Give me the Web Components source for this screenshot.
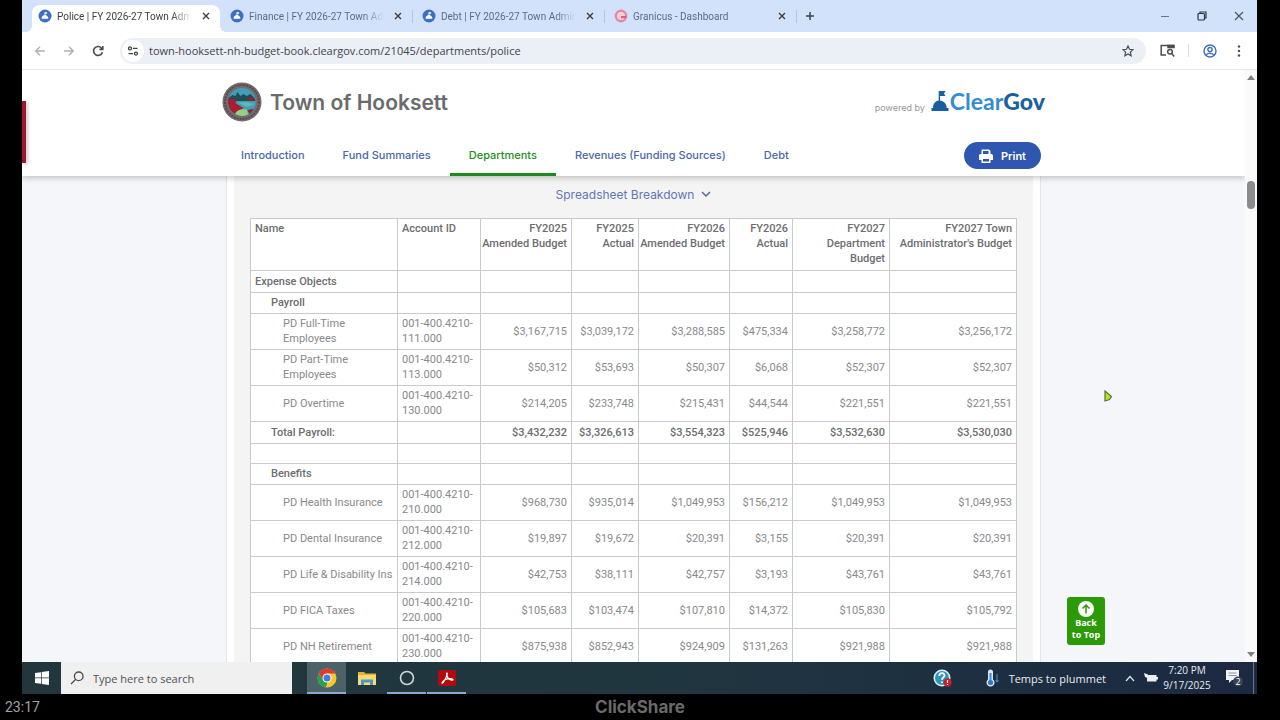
<!DOCTYPE html>
<html lang="en">
<head>
<meta charset="utf-8">
<title>Police | FY 2026-27 Town Administrator's Budget</title>
<style>
  * { box-sizing: border-box; }
  body {
    margin: 0;
    height: 100vh;
    display: flex;
    flex-direction: column;
    background: #000;
    font-family: "Open Sans", "Noto Sans", sans-serif;
    overflow: hidden;
  }
  main {
    flex: 1;
    min-height: 0;
    display: flex;
    flex-direction: column;
    margin: 0 23px 0 22px;
    background: #fff;
  }
</style>
</head>
<body>
<main>
  <tab-strip>
    <browser-tab icon="cleargov" active>Police | FY 2026-27 Town Administrator</browser-tab>
    <browser-tab icon="cleargov">Finance | FY 2026-27 Town Administrator</browser-tab>
    <browser-tab icon="cleargov">Debt | FY 2026-27 Town Administrator</browser-tab>
    <browser-tab icon="granicus">Granicus - Dashboard</browser-tab>
  </tab-strip>
  <browser-toolbar url="town-hooksett-nh-budget-book.cleargov.com/21045/departments/police"></browser-toolbar>
  <page-view>
    <site-header>
      <nav-link>Introduction</nav-link>
      <nav-link>Fund Summaries</nav-link>
      <nav-link active>Departments</nav-link>
      <nav-link>Revenues (Funding Sources)</nav-link>
      <nav-link>Debt</nav-link>
    </site-header>
    <budget-card>
      <budget-table></budget-table>
    </budget-card>
    <back-to-top slot="overlay"></back-to-top>
  </page-view>
  <task-bar></task-bar>
</main>
<share-bar time="23:17">ClickShare</share-bar>

<script>
const favicons = {
  cleargov: `<svg width="14" height="14" viewBox="0 0 14 14"><circle cx="7" cy="7" r="6.5" fill="#3f6fc4"/><path d="M3.5 9.8c0-2 1.2-3.6 3-3.9V3.2h2.6v1.6H7.4v1.1c1.8.3 3 1.9 3 3.9z" fill="#fff"/></svg>`,
  granicus: `<svg width="14" height="14" viewBox="0 0 14 14"><circle cx="7" cy="7" r="5.2" fill="#f6cfda" stroke="#e58aa4" stroke-width="2.4"/><path d="M7 7h5.4v2.2H7z" fill="#db5f80"/></svg>`
};

class TabStrip extends HTMLElement {
  constructor() {
    super();
    this.attachShadow({ mode: 'open' }).innerHTML = `
      <style>
        :host {
          display: flex;
          height: 32px;
          padding-left: 10px;
          background: #d3e2fb;
        }
        button {
          border: 0;
          padding: 0;
          background: none;
          display: grid;
          place-items: center;
        }
        .add { width: 20px; height: 32px; }
        .window { margin-left: auto; display: flex; }
        .window button { width: 37px; height: 32px; }
      </style>
      <slot></slot>
      <button class="add" aria-label="New tab">
        <svg width="10" height="10" viewBox="0 0 10 10"><path d="M5 1v8M1 5h8" stroke="#3c4350" stroke-width="1.5"/></svg>
      </button>
      <div class="window">
        <button aria-label="Minimize"><svg width="10" height="10"><path d="M1 5.5h8" stroke="#6b7587"/></svg></button>
        <button aria-label="Restore"><svg width="10" height="10" viewBox="0 0 10 10" fill="none" stroke="#2c3442" stroke-width="1.2"><rect x="1" y="2.5" width="6.5" height="6.5" rx="1"/><path d="M3 2.2V1h6v6H7.8"/></svg></button>
        <button aria-label="Close"><svg width="10" height="10" viewBox="0 0 10 10"><path d="M1 1l8 8M9 1L1 9" stroke="#4a5364" stroke-width="1.2"/></svg></button>
      </div>
    `;
  }
}

class BrowserTab extends HTMLElement {
  constructor() {
    super();
    this.attachShadow({ mode: 'open' });
  }

  connectedCallback() {
    this.shadowRoot.innerHTML = `
      <style>
        :host {
          display: flex;
          flex: 0 1 192px;
          min-width: 0;
          box-sizing: border-box;
          height: 27px;
          margin-top: 5px;
          padding-right: 4px;
        }
        .tab {
          flex: 1;
          min-width: 0;
          display: flex;
          align-items: center;
          gap: 5px;
          padding: 0 5px 0 6px;
          height: 22px;
          position: relative;
          color: #5c6a84;
          font: 10px Roboto, sans-serif;
        }
        .tab::after {
          content: "";
          width: 1px;
          height: 13px;
          background: #b3c4e2;
          position: absolute;
          right: -1px;
        }
        :host([active]) .tab {
          height: 27px;
          padding-bottom: 5px;
          box-sizing: border-box;
          background: #fff;
          border-radius: 8px 8px 0 0;
          color: #3c4043;
        }
        :host([active]) .tab::before, :host([active]) .tab::after {
          content: "";
          position: absolute;
          bottom: 0;
          width: 6px;
          height: 6px;
        }
        :host([active]) .tab::before {
          left: -6px;
          background: radial-gradient(circle at 0 0, transparent 6px, #fff 6px);
        }
        :host([active]) .tab::after {
          right: -6px;
          background: radial-gradient(circle at 100% 0, transparent 6px, #fff 6px);
        }
        svg { flex: none; }
        .title {
          flex: 1;
          overflow: hidden;
          white-space: nowrap;
          mask-image: linear-gradient(to right, #000 85%, transparent);
        }
        button {
          border: 0;
          padding: 0;
          background: none;
          width: 18px;
          height: 18px;
          display: grid;
          place-items: center;
        }
      </style>
      <div class="tab">
        ${favicons[this.getAttribute('icon')]}
        <span class="title"><slot></slot></span>
        <button aria-label="Close tab"><svg width="8" height="8" viewBox="0 0 8 8"><path d="M1 1l6 6M7 1L1 7" stroke="#3c4043" stroke-width="1.4"/></svg></button>
      </div>
    `;
  }
}

class BrowserToolbar extends HTMLElement {
  constructor() {
    super();
    this.attachShadow({ mode: 'open' });
  }

  connectedCallback() {
    this.shadowRoot.innerHTML = `
      <style>
        :host {
          display: flex;
          align-items: center;
          height: 38px;
          box-sizing: border-box;
          padding: 0 4px 0 3px;
          background: #fff;
          border-bottom: 1px solid #e6e8ea;
        }
        button {
          border: 0;
          padding: 0;
          background: none;
          width: 29px;
          height: 28px;
          display: grid;
          place-items: center;
          flex: none;
        }
        .box {
          flex: 1;
          display: flex;
          align-items: center;
          height: 26px;
          margin: 0 7px 0 8px;
          padding-right: 4px;
          border-radius: 13px;
          background: #ebeff6;
        }
        .box .site {
          width: 22px;
          height: 22px;
          margin-left: 2px;
          border-radius: 50%;
          background: #fff;
        }
        input {
          flex: 1;
          min-width: 0;
          border: 0;
          padding: 0 0 0 5px;
          background: none;
          outline: none;
          font: 11px "Open Sans", sans-serif;
          color: #3f444b;
        }
        .line { width: 1px; height: 13px; margin: 0 6px; background: #d3dff2; }
      </style>
      <button aria-label="Back"><svg width="12" height="12" viewBox="0 0 12 12" fill="none" stroke="#aeb1b5" stroke-width="1.4"><path d="M11 6H2M6 1.8L1.8 6 6 10.2"/></svg></button>
      <button aria-label="Forward"><svg width="12" height="12" viewBox="0 0 12 12" fill="none" stroke="#aeb1b5" stroke-width="1.4"><path d="M1 6h9M6 1.8L10.2 6 6 10.2"/></svg></button>
      <button aria-label="Reload"><svg width="12" height="12" viewBox="0 0 12 12" fill="none" stroke="#4a4d51" stroke-width="1.6"><path d="M10.4 7.2A4.5 4.5 0 1 1 9.3 2.8L10.6 4M10.8 1v3.4H7.4"/></svg></button>
      <div class="box">
        <button class="site" aria-label="View site information"><svg width="12" height="12" viewBox="0 0 12 12" fill="none" stroke="#3c4043" stroke-width="1.3"><circle cx="3" cy="3.4" r="1.5"/><path d="M6 3.4h4.5M1.5 8.6H6"/><circle cx="9" cy="8.6" r="1.5"/></svg></button>
        <input type="text" aria-label="Address" value="${this.getAttribute('url')}">
        <button aria-label="Bookmark"><svg width="12" height="12" viewBox="0 0 12 12" fill="none" stroke="#4a4d51" stroke-width="1.2"><path d="M6 1l1.5 3.3 3.5.4-2.6 2.4.7 3.6L6 8.9l-3.1 1.8.7-3.6L1 4.7l3.5-.4z"/></svg></button>
      </div>
      <button aria-label="Search tabs"><svg width="15" height="13" viewBox="0 0 15 13" fill="none" stroke="#4a4d51" stroke-width="1.5"><path d="M6 11H1.2V1.5H13.5V4"/><path d="M8 1.5h6v2H8z" fill="#4a4d51"/><circle cx="10" cy="7.8" r="2.3"/><path d="M11.6 9.6l2.6 2.8"/></svg></button>
      <span class="line"></span>
      <button aria-label="Profile"><svg width="14" height="14" viewBox="0 0 14 14" fill="none" stroke="#3f6cb8" stroke-width="1.4"><circle cx="7" cy="7" r="6"/><circle cx="7" cy="5.6" r="2.1"/><path d="M3.2 11.2c1-2.4 6.6-2.4 7.6 0"/></svg></button>
      <button aria-label="Menu"><svg width="4" height="14" viewBox="0 0 4 14" fill="#4a4d51"><circle cx="2" cy="2.5" r="1.2"/><circle cx="2" cy="7" r="1.2"/><circle cx="2" cy="11.5" r="1.2"/></svg></button>
    `;
  }
}

class PageView extends HTMLElement {
  constructor() {
    super();
    this.attachShadow({ mode: 'open' }).innerHTML = `
      <style>
        :host {
          flex: 1;
          min-height: 0;
          display: flex;
          position: relative;
          overflow: hidden;
          background: #f4f6f9;
        }
        .content { flex: 1; min-width: 0; overflow: hidden; }
        .scrollbar {
          width: 12px;
          box-sizing: border-box;
          padding: 4px 0;
          display: flex;
          flex-direction: column;
          align-items: center;
          background: #fafafb;
        }
        .thumb {
          width: 8px;
          height: 28px;
          margin-top: 100px;
          margin-bottom: auto;
          border-radius: 4px;
          background: #8a8b8d;
        }
        .side {
          position: absolute;
          left: 0;
          top: 31px;
          width: 4px;
          height: 62px;
          background: #a3152f;
          box-shadow: 1px 1px 4px rgba(0, 0, 0, .3);
        }
        .cursor { position: absolute; left: 1081px; top: 320px; }
      </style>
      <div class="content"><slot></slot></div>
      <div class="scrollbar">
        <svg width="8" height="7" viewBox="0 0 8 7"><path d="M4 1l4 5H0z" fill="#808184"/></svg>
        <div class="thumb"></div>
        <svg width="8" height="7" viewBox="0 0 8 7"><path d="M4 6L0 1h8z" fill="#808184"/></svg>
      </div>
      <div class="side"></div>
      <slot name="overlay"></slot>
      <svg class="cursor" width="11" height="13" viewBox="0 0 11 13"><path d="M2 1l6.5 5.5-2 3-4.500 1.500z" fill="#b4e61e" stroke="#56753a" stroke-width="1.2"/></svg>
    `;
  }
}

class SiteHeader extends HTMLElement {
  constructor() {
    super();
    this.attachShadow({ mode: 'open' }).innerHTML = `
      <style>
        :host {
          display: block;
          position: relative;
          background: #fff;
          box-shadow: 0 2px 6px rgba(0, 0, 0, .22);
          font-family: Inter, sans-serif;
        }
        .inner { max-width: 823px; margin: 0 auto; }
        .brand {
          display: flex;
          align-items: center;
          gap: 8px;
          height: 64px;
        }
        h1 {
          margin: 0;
          font-size: 21px;
          font-weight: 600;
          color: #6a6b6d;
        }
        .powered {
          margin-left: auto;
          display: flex;
          align-items: flex-end;
          gap: 6px;
          color: #96979a;
          font-size: 9px;
          line-height: 13px;
        }
        .logo { display: flex; align-items: flex-end; gap: 1px; padding-bottom: 3px; }
        .logo span {
          font: 700 23px/20px Lato, sans-serif;
          color: #338dd2;
        }
        .logo b { color: #1a5f9e; }
        nav { display: flex; height: 42px; }
        .print {
          align-self: flex-start;
          margin-left: auto;
          margin-right: 4px;
          display: flex;
          align-items: center;
          gap: 8px;
          height: 27px;
          margin-top: 8px;
          padding: 0 15px;
          border: 0;
          border-radius: 14px;
          background: #2f57b0;
          color: #fff;
          font: 600 11px Inter, sans-serif;
        }
      </style>
      <div class="inner">
        <div class="brand">
          <svg width="40" height="40" viewBox="0 0 40 40">
            <circle cx="20" cy="20" r="19.5" fill="#756a6d"/>
            <circle cx="20" cy="20" r="17" fill="none" stroke="#574c50" stroke-width="2" stroke-dasharray="2 1"/>
            <circle cx="20" cy="20" r="14" fill="#3f9fb4"/>
            <path d="M6.5 16l4-3 3 1 2-4 3 4 3-2 3 2 4-2 4 4 1 3H7z" fill="#1f4e57"/>
            <path d="M6.3 17c4-1 6 1 9 1l-2 3 8 5-8 6C8 29 5 23 6.3 17z" fill="#a51e35"/>
            <path d="M24 15l8 1 1 3-7-1zM25 28l7-1-4 5z" fill="#8d2234"/>
            <path d="M16 21l8-1 9 2-8 3z" fill="#67b5b4"/>
            <path d="M13 31.500c2-4 7-5 12-4l1 5c-4 2-9 2-13-1z" fill="#9bce7e"/>
          </svg>
          <h1>Town of Hooksett</h1>
          <div class="powered">powered by
            <div class="logo">
              <svg width="18" height="20" viewBox="0 0 17 20" fill="#17609f"><path d="M0 20v-3h1.500C1.500 12.500 4 10 7.200 9.500V0H14l-1.500 2.500L14 5H8.500v4.500c3.700.5 6.700 3 6.700 7.500H17v3z"/></svg>
              <span>Clear<b>Gov</b></span>
            </div>
          </div>
        </div>
        <nav>
          <slot></slot>
          <button class="print">
            <svg width="14" height="14" viewBox="0 0 14 14"><path d="M2.5 5V.5H10L11.500 2v3zM1.500 5h11A1.500 1.500 0 0 1 14 6.500V11h-2.500v3h-9v-3H0V6.500A1.500 1.500 0 0 1 1.500 5z" fill="#fff"/><path d="M4 2h5.500v3H4zM4 10h6v2.500H4z" fill="#2f57b0"/></svg>
            Print
          </button>
        </nav>
      </div>
    `;
  }
}

class NavLink extends HTMLElement {
  constructor() {
    super();
    this.attachShadow({ mode: 'open' }).innerHTML = `
      <style>
        :host { display: flex; }
        a {
          box-sizing: border-box;
          height: 42px;
          padding: 13px 19px 0;
          border-bottom: 3px solid transparent;
          color: #4a66ad;
          font: 500 11px/17px Inter, sans-serif;
          text-decoration: none;
          white-space: nowrap;
        }
        :host([active]) a { color: #23901c; border-color: #1d8a1d; }
      </style>
      <a href="#"><slot></slot></a>
    `;
  }
}

class BudgetCard extends HTMLElement {
  constructor() {
    super();
    this.attachShadow({ mode: 'open' }).innerHTML = `
      <style>
        :host {
          display: block;
          box-sizing: border-box;
          max-width: 815px;
          margin: 0 auto;
          padding: 0 7px;
          background: #fff;
          border: solid #e3e5e8;
          border-width: 0 1px;
        }
        .panel { padding: 0 16px; background: #f4f4f5; }
        button {
          display: flex;
          align-items: center;
          gap: 7px;
          height: 36px;
          margin: 0 auto;
          padding: 0;
          border: 0;
          background: none;
          color: #6277b4;
          font: 12px Inter, sans-serif;
        }
        .sheet { padding-top: 6px; }
      </style>
      <div class="panel">
        <button aria-expanded="true">Spreadsheet Breakdown
          <svg width="10" height="7" viewBox="0 0 10 7"><path d="M1 1l4 4 4-4" fill="none" stroke="#5567a0" stroke-width="1.5"/></svg>
        </button>
        <div class="sheet"><slot></slot></div>
      </div>
    `;
  }
}

const columns = [
  ['Name', 147],
  ['Account ID', 83],
  ['FY2025 Amended Budget', 91],
  ['FY2025 Actual', 67],
  ['FY2026 Amended Budget', 91],
  ['FY2026 Actual', 63],
  ['FY2027 Department Budget', 97],
  ['FY2027 Town Administrator\'s Budget', 127]
];

const rows = [
  ['group', 'Expense Objects'],
  ['sub', 'Payroll'],
  ['item', 'PD Full-Time Employees', '001-400.4210-111.000', '$3,167,715', '$3,039,172', '$3,288,585', '$475,334', '$3,258,772', '$3,256,172'],
  ['item', 'PD Part-Time Employees', '001-400.4210-113.000', '$50,312', '$53,693', '$50,307', '$6,068', '$52,307', '$52,307'],
  ['item', 'PD Overtime', '001-400.4210-130.000', '$214,205', '$233,748', '$215,431', '$44,544', '$221,551', '$221,551'],
  ['total', 'Total Payroll:', '', '$3,432,232', '$3,326,613', '$3,554,323', '$525,946', '$3,532,630', '$3,530,030'],
  ['blank', ''],
  ['sub', 'Benefits'],
  ['item', 'PD Health Insurance', '001-400.4210-210.000', '$968,730', '$935,014', '$1,049,953', '$156,212', '$1,049,953', '$1,049,953'],
  ['item', 'PD Dental Insurance', '001-400.4210-212.000', '$19,897', '$19,672', '$20,391', '$3,155', '$20,391', '$20,391'],
  ['item', 'PD Life & Disability Ins', '001-400.4210-214.000', '$42,753', '$38,111', '$42,757', '$3,193', '$43,761', '$43,761'],
  ['item', 'PD FICA Taxes', '001-400.4210-220.000', '$105,683', '$103,474', '$107,810', '$14,372', '$105,830', '$105,792'],
  ['item', 'PD NH Retirement', '001-400.4210-230.000', '$875,938', '$852,943', '$924,909', '$131,263', '$921,988', '$921,988']
];

class BudgetTable extends HTMLElement {
  constructor() {
    super();
    this.attachShadow({ mode: 'open' });
  }

  connectedCallback() {
    const row = ([kind, ...cells]) => `
      <tr class="${kind}">
        ${columns.map((c, i) => `<td>${(cells[i] || '').replace('&', '&amp;')}</td>`).join('')}
      </tr>`;

    this.shadowRoot.innerHTML = `
      <style>
        :host { display: block; }
        table {
          width: 100%;
          table-layout: fixed;
          border-collapse: collapse;
          background: #fff;
          font: 11px/15px Roboto, sans-serif;
          color: #88898b;
        }
        th, td {
          border: 1px solid #c9cacc;
          padding: 2px 4px 3px;
          text-align: right;
        }
        th {
          height: 46px;
          padding-left: 0;
          vertical-align: top;
          font-weight: 500;
          color: #6c6d6f;
        }
        th:nth-child(-n+2), td:nth-child(-n+2) { text-align: left; padding-left: 4px; }
        .group, .total { height: 22px; }
        .sub { height: 21px; }
        .blank { height: 20px; }
        .group td, .sub td, .total td { font-weight: 500; color: #6c6d6f; }
        .blank td { padding: 0; }
        .sub td:first-child, .total td:first-child { padding-left: 20px; }
        .item td:first-child { padding-left: 32px; }
      </style>
      <table>
        <colgroup>${columns.map(c => `<col style="width: ${c[1]}px">`).join('')}</colgroup>
        <thead><tr>${columns.map(c => `<th scope="col">${c[0]}</th>`).join('')}</tr></thead>
        <tbody>${rows.map(row).join('')}</tbody>
      </table>
    `;
  }
}

class BackToTop extends HTMLElement {
  constructor() {
    super();
    this.attachShadow({ mode: 'open' }).innerHTML = `
      <style>
        :host { position: absolute; right: 152px; bottom: 17px; }
        button {
          display: flex;
          flex-direction: column;
          align-items: center;
          width: 38px;
          height: 48px;
          padding: 4px 0 0;
          border: 0;
          border-radius: 3px;
          background: #2a9a06;
          color: #fff;
          font: 700 9px/12px "Open Sans", sans-serif;
        }
        .label { display: block; white-space: nowrap; }
      </style>
      <button>
        <svg width="16" height="16" viewBox="0 0 16 16"><circle cx="8" cy="8" r="8" fill="#fff"/><path d="M8 12.500V4M4.500 7.500L8 4l3.500 3.500" fill="none" stroke="#2a9a06" stroke-width="1.5"/></svg>
        <span class="label">Back</span>
        <span class="label">to Top</span>
      </button>
    `;
  }
}

class TaskBar extends HTMLElement {
  constructor() {
    super();
    this.attachShadow({ mode: 'open' }).innerHTML = `
      <style>
        :host {
          display: flex;
          height: 32px;
          background: linear-gradient(to right, #22373d, #20363f 50%, #1b2942);
          color: #e8ecf0;
          font-size: 11px;
        }
        button {
          border: 0;
          padding: 0;
          background: none;
          color: inherit;
          font: inherit;
          display: flex;
          align-items: center;
          justify-content: center;
        }
        .start { width: 39px; }
        .search {
          width: 231px;
          display: flex;
          align-items: center;
          gap: 9px;
          box-sizing: border-box;
          padding-left: 9px;
          background: #f0f0f0;
        }
        input {
          flex: 1;
          min-width: 0;
          border: 0;
          padding: 0;
          background: none;
          outline: none;
          font: 11px "Open Sans", sans-serif;
        }
        input::placeholder { color: #505254; opacity: 1; }
        .apps { display: flex; padding-left: 15px; }
        .apps button { width: 39px; margin-right: 1px; box-sizing: border-box; }
        .apps .current { background: #4c6268; }
        .apps .open { border-bottom: 2px solid #86add0; padding-top: 2px; }
        .tray { margin-left: auto; display: flex; align-items: center; }
        .help { margin-right: 33px; }
        .weather { gap: 10px; margin-right: 19px; }
        .up { margin-right: 9px; }
        .clock { display: block; width: 58px; font-size: 10px; line-height: 15px; text-align: center; }
        .notes { margin-left: 10px; margin-right: 10px; }
        .desk { width: 1px; height: 32px; margin-right: 3px; background: #69758a; }
      </style>
      <button class="start" aria-label="Start"><svg width="14" height="14" viewBox="0 0 14 14" fill="#fff"><path d="M0 2l6-.8v5.400H0zM6.700 1.100L14 0v6.600H6.700zM0 7.300h6v5.500L0 12zM6.700 7.300H14V14l-7.300-1.100z"/></svg></button>
      <label class="search">
        <svg width="14" height="14" viewBox="0 0 14 14" fill="none" stroke="#4a4c4e" stroke-width="1.3"><circle cx="8.7" cy="5.3" r="4.3"/><path d="M5.6 8.400L1 13"/></svg>
        <input type="text" placeholder="Type here to search" aria-label="Type here to search">
      </label>
      <div class="apps">
        <button class="open current" aria-label="Chrome">
          <svg width="20" height="20" viewBox="0 0 20 20"><circle cx="10" cy="10" r="9.5" fill="#f7c92c"/><path d="M1.800 5.200A9.500 9.500 0 0 1 18.300 5.500H10L6 12.300z" fill="#dc3b2f"/><path d="M1.800 5.200L6.200 12.300l4.300 2L8.700 19.400A9.500 9.500 0 0 1 1.800 5.200z" fill="#2f9e4c"/><circle cx="10" cy="10" r="4.5" fill="#fff"/><circle cx="10" cy="10" r="3.5" fill="#3f7fe0"/></svg>
        </button>
        <button aria-label="File Explorer">
          <svg width="18" height="15" viewBox="0 0 18 15"><path d="M0 1h6l1.500 1.500H18V14H0z" fill="#e4b33a"/><path d="M0 4h18v10H0z" fill="#fadb72"/><path d="M3 14V8.500h12V14h-3v-2.500H6V14z" fill="#4c96c9"/></svg>
        </button>
        <button class="open" aria-label="Cortana">
          <svg width="16" height="16" viewBox="0 0 16 16"><circle cx="8" cy="8" r="6.5" fill="none" stroke="#d0d7da" stroke-width="1.6"/></svg>
        </button>
        <button class="open" aria-label="Acrobat">
          <svg width="18" height="16" viewBox="0 0 18 16"><rect width="18" height="16" rx="2" fill="#b30b0b"/><path d="M9 3c-1.500 0 .5 4.500 2 6 1.500 1.200 4 1.800 4 .6S10 8.200 7.500 9.600 3.500 13 4.200 13.200C5.500 13.400 10.500 3 9 3z" fill="none" stroke="#fff" stroke-width="1.2"/></svg>
        </button>
      </div>
      <div class="tray">
        <button class="help" aria-label="Help"><svg width="19" height="18" viewBox="0 0 19 18"><circle cx="9" cy="9" r="8.5" fill="#e2f1f6"/><circle cx="9" cy="9" r="7" fill="#2b96bd"/><path d="M6.300 7c0-3.800 5.600-3.500 5.200-.4C11.300 8.300 9 8.500 9 10.800M9 12.500v1.600" fill="none" stroke="#fff" stroke-width="1.8"/><circle cx="14.5" cy="13.5" r="4.2" fill="#c81e2c"/><path d="M14.500 11v3M14.500 15v1" stroke="#fff" stroke-width="1.2"/></svg></button>
        <button class="weather">
          <svg width="14" height="18" viewBox="0 0 14 18"><path d="M3 3a2.500 2.500 0 0 1 5 0v7.500a4 4 0 1 1-5 0z" fill="#dce8f4"/><path d="M5.500 4v9" stroke="#3f82d0" stroke-width="2"/><circle cx="5.5" cy="13.5" r="2.6" fill="#2f78cc"/><path d="M12 5v8M10.300 11.300L12 13l1.700-1.700" fill="none" stroke="#3f82d0" stroke-width="1.2"/></svg>
          Temps to plummet
        </button>
        <button class="up" aria-label="Show hidden icons"><svg width="10" height="7" viewBox="0 0 10 7"><path d="M1 6l4-4.500L9 6" fill="none" stroke="#dfe4ea" stroke-width="1.2"/></svg></button>
        <svg width="14" height="10" viewBox="0 0 14 10" fill="#eceff2"><path d="M3 2h9.500v6.500H3zM12.500 4H14v2.500h-1.500zM0 0l4 1.500-.5 3.500L1 4z"/></svg>
        <button class="clock">7:20 PM<br>9/17/2025</button>
        <button class="notes" aria-label="2 notifications"><svg width="17" height="18" viewBox="0 0 17 18"><path d="M0 1h13v10H6l-3 3v-3H0z" fill="#f2f4f6"/><path d="M2.500 4h8M2.500 6.500h8" stroke="#8b93a0"/><circle cx="12" cy="12.5" r="5" fill="#3a4150"/><text x="12" y="16" text-anchor="middle" font-family="Open Sans" font-size="9" fill="#fff">2</text></svg></button>
        <span class="desk"></span>
      </div>
    `;
  }
}

class ShareBar extends HTMLElement {
  constructor() {
    super();
    this.attachShadow({ mode: 'open' });
  }

  connectedCallback() {
    this.shadowRoot.innerHTML = `
      <style>
        :host {
          display: grid;
          grid-template-columns: 1fr auto 1fr;
          align-items: center;
          height: 26px;
          padding: 0 5px;
          background: #000;
          font-family: Roboto, sans-serif;
        }
        time { color: #a2a2a2; font-size: 14px; }
        b { color: #6a6a6a; font: 700 17px Inter, sans-serif; }
      </style>
      <time>${this.getAttribute('time')}</time>
      <b><slot></slot></b>
    `;
  }
}

customElements.define('tab-strip', TabStrip);
customElements.define('browser-tab', BrowserTab);
customElements.define('browser-toolbar', BrowserToolbar);
customElements.define('page-view', PageView);
customElements.define('site-header', SiteHeader);
customElements.define('nav-link', NavLink);
customElements.define('budget-card', BudgetCard);
customElements.define('budget-table', BudgetTable);
customElements.define('back-to-top', BackToTop);
customElements.define('task-bar', TaskBar);
customElements.define('share-bar', ShareBar);
</script>
</body>
</html>
